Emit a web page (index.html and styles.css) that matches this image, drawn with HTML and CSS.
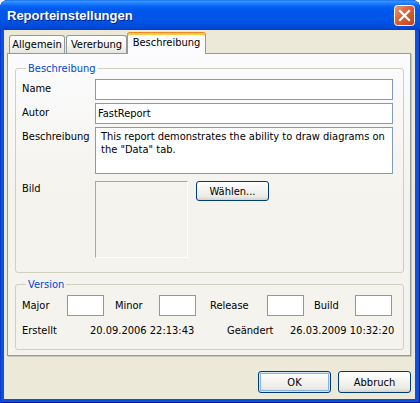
FILE: index.html
```html
<!DOCTYPE html>
<html lang="de">
<head>
<meta charset="utf-8">
<title>Reporteinstellungen</title>
<link rel="stylesheet" href="styles.css">
</head>
<body>
<div class="window">
  <div class="titlebar">
    <span class="title">Reporteinstellungen</span>
    <div class="close">
      <svg width="21" height="21" viewBox="0 0 21 21">
        <defs>
          <linearGradient id="cg" x1="0" y1="0" x2="1" y2="1">
            <stop offset="0" stop-color="#EC9A7E"/>
            <stop offset="0.45" stop-color="#DB6139"/>
            <stop offset="1" stop-color="#C2400F"/>
          </linearGradient>
        </defs>
        <rect x="0.5" y="0.5" width="20" height="20" rx="3" fill="url(#cg)" stroke="#ffffff"/>
        <path d="M6 6 L15 15 M15 6 L6 15" stroke="#ffffff" stroke-width="2.2" stroke-linecap="square"/>
      </svg>
    </div>
  </div>
  <div class="client">
    <div class="tabs">
      <div class="tab tab-allg">Allgemein</div>
      <div class="tab tab-ver">Vererbung</div>
      <div class="tab active">Beschreibung</div>
    </div>
    <div class="panel">
      <fieldset class="group group-desc">
        <legend>Beschreibung</legend>
        <div class="form">
          <span class="lbl">Name</span>
          <div class="input"></div>
          <span class="lbl">Autor</span>
          <div class="input">FastReport</div>
          <span class="lbl">Beschreibung</span>
          <div class="textarea">This report demonstrates the ability to draw diagrams on<br>the "Data" tab.</div>
          <span class="lbl row-bild">Bild</span>
          <div class="bild-row row-bild">
            <div class="picture"></div>
            <div class="btn btn-small">Wählen...</div>
          </div>
        </div>
      </fieldset>
      <fieldset class="group group-version">
        <legend>Version</legend>
        <div class="vrow1">
          <span>Major</span>
          <div class="input"></div>
          <span class="pl-minor">Minor</span>
          <div class="input"></div>
          <span class="pl-release">Release</span>
          <div class="input"></div>
          <span class="pl-build">Build</span>
          <div class="input"></div>
        </div>
        <div class="vrow2">
          <span>Erstellt</span>
          <span>20.09.2006 22:13:43</span>
          <span>Geändert</span>
          <span>26.03.2009 10:32:20</span>
        </div>
      </fieldset>
    </div>
    <div class="buttons">
      <div class="btn default">OK</div>
      <div class="btn">Abbruch</div>
    </div>
  </div>
</div>
</body>
</html>
```

FILE: styles.css
```css
* { box-sizing: border-box; }
html, body { margin: 0; padding: 0; }
body {
  width: 420px;
  height: 403px;
  overflow: hidden;
  background: #ffffff;
  color: #000;
  font: 11px/13px Tahoma, "DejaVu Sans Condensed", "Liberation Sans", sans-serif;
}
.window {
  width: 420px;
  height: 403px;
  display: flex;
  flex-direction: column;
  background: #0852DE;
  border-radius: 8px 8px 0 0;
  box-shadow: inset 1px 0 0 #0A3BD0, inset -1px 0 0 #00139A, inset 0 -1px 0 #00139A;
}
.titlebar {
  height: 30px;
  flex: none;
  display: flex;
  align-items: flex-start;
  justify-content: space-between;
  padding: 5px 5px 0 7px;
  border-radius: 8px 8px 0 0;
  background: linear-gradient(#0A5FF0 0, #3D95FF 1px, #2484FF 3px, #0766F6 6px, #0057EB 10px, #0055E8 20px, #004AD9 27px, #003FC2 30px);
}
.title {
  color: #fff;
  font-family: "Liberation Sans", Arial, sans-serif;
  font-weight: bold;
  font-size: 13px;
  line-height: 21px;
  text-shadow: 1px 1px 0 #0A1E8A;
}
.close { width: 21px; height: 21px; }
.close svg { display: block; }
.client {
  flex: 1;
  margin: 0 5px 4px 4px;
  background: #ECE9D8;
  padding: 2px 4px 0 3px;
  display: flex;
  flex-direction: column;
}
.tabs {
  height: 21px;
  display: flex;
  align-items: flex-end;
  padding-left: 2px;
}
.tab {
  height: 18px;
  padding-top: 2px;
  text-align: center;
  border: 1px solid #919B9C;
  border-bottom: none;
  border-radius: 3px 3px 0 0;
  background: linear-gradient(#FFFFFF, #F6F6F3 50%, #E6E5DD);
}
.tab-allg { width: 56px; margin-right: 1px; }
.tab-ver { width: 61px; }
.tab.active {
  width: 79px;
  height: 22px;
  padding-top: 3px;
  margin-bottom: -1px;
  position: relative;
  z-index: 1;
  border-top: 1px solid #E68B2C;
  background: #FCFCFE;
  box-shadow: inset 0 2px 0 #FFC73C;
}
.panel {
  border: 1px solid #919B9C;
  background: linear-gradient(#FCFCFE, #F4F3EE 45%);
  padding: 8px 6px 5px 7px;
  box-shadow: 1px 1px 0 #C9C7BA;
}
.group {
  margin: 0;
  min-width: 0;
  border: 1px solid #D0D0BF;
  border-radius: 3px;
}
.group legend {
  padding: 0 2px;
  margin-left: 4px;
  color: #0046D5;
  line-height: 13px;
}
.group-desc { padding: 4px 10px 14px 6px; }
.group-version { margin-top: 5px; padding: 4px 11px 12px 6px; }
.form {
  display: grid;
  grid-template-columns: 73px 1fr;
  row-gap: 3px;
  align-items: start;
}
.lbl { padding-top: 3px; }
.input {
  height: 21px;
  border: 1px solid #7F9DB9;
  background: #fff;
  padding: 3px 2px 0;
  white-space: nowrap;
}
.textarea {
  height: 47px;
  border: 1px solid #7F9DB9;
  background: #fff;
  padding: 2px 5px;
  white-space: nowrap;
}
.row-bild { margin-top: 4px; }
.lbl.row-bild { padding-top: 1px; }
.bild-row { display: flex; align-items: flex-start; }
.picture {
  width: 93px;
  height: 77px;
  border: 1px solid;
  border-color: #ACA899 #FFFFFF #FFFFFF #ACA899;
}
.btn {
  width: 73px;
  height: 22px;
  display: flex;
  align-items: center;
  justify-content: center;
  border: 1px solid #003C74;
  border-radius: 3px;
  background: linear-gradient(#FFFFFF, #F5F5F1 40%, #ECEBE6 80%, #D8D3C8);
}
.btn-small { height: 20px; margin-left: 8px; }
.btn.default {
  box-shadow: inset 0 0 0 1px #CEE7FF, inset 0 0 0 2px #8EB0E6;
}
.vrow1 {
  display: grid;
  grid-template-columns: 45px 37px 55px 37px 71px 37px 51px 37px;
  align-items: center;
}
.pl-minor { padding-left: 11px; }
.pl-release { padding-left: 14px; }
.pl-build { padding-left: 10px; }
.vrow2 {
  display: grid;
  grid-template-columns: 68px 137px 63px auto;
  margin-top: 8px;
  white-space: nowrap;
}
.buttons {
  display: flex;
  justify-content: flex-end;
  gap: 7px;
  margin-top: 15px;
}
```
